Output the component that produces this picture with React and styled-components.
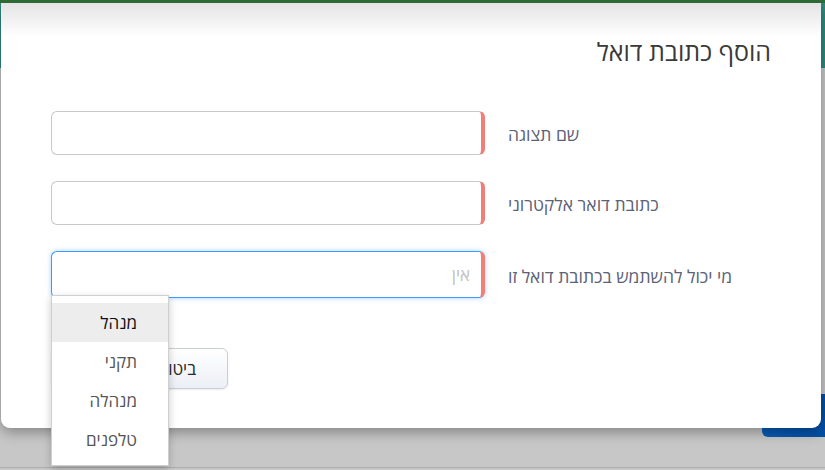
import React from 'react'
import styled, { createGlobalStyle } from 'styled-components'

const GlobalStyle = createGlobalStyle`
   html, body {
      margin: 0;
      padding: 0;
      background: #c7c7c7;
      font-family: "Open Sans", "DejaVu Sans", sans-serif;
   }
`

const Page = styled.div`
   position: relative;
   width: 825px;
   height: 470px;
   overflow: hidden;
   background: #c7c7c7;
   border-top: 3px solid #2d6a35;
   box-sizing: border-box;
`

const Header = styled.div`
   height: 65px;
   background: #2f8a80;
`

const PageBody = styled.div`
   display: flex;
   flex-direction: column;
   justify-content: flex-end;
   height: 399px;
   border-bottom: 1px solid #adadad;
`

const BackButton = styled.div`
   align-self: flex-end;
   width: 63px;
   height: 43px;
   margin-bottom: 30px;
   border-radius: 6px 0 0 6px;
   background: linear-gradient(90deg, #0a5cb8, #0050a8);
`

const Modal = styled.div`
   position: absolute;
   left: 1px;
   top: 0;
   width: 820px;
   height: 425px;
   box-sizing: border-box;
   direction: rtl;
   background: linear-gradient(#e4e4e4 0px, #fff 34px);
   border-radius: 0 0 9px 9px;
   box-shadow: 0 4px 14px rgba(0, 0, 0, 0.35);
   padding: 32px 50px 0 50px;
`

const Title = styled.h2`
   margin: 0 0 44px 0;
   font-size: 25px;
   font-weight: 400;
   color: #3a3a3a;
   line-height: 32px;
`

const Form = styled.div`
   display: flex;
   flex-direction: column;
   gap: 26px;
`

const Row = styled.div`
   display: flex;
   align-items: center;
   gap: 23px;
`

const Label = styled.label`
   flex: 1;
   font-size: 17.5px;
   color: #5b6276;
   text-align: left;
   direction: ltr;
   padding-top: 2px;
`

const LabelText = styled.span`
   direction: rtl;
   unicode-bidi: embed;
`

const Input = styled.div`
   width: 434px;
   height: ${p => p.$focused ? 47 : 44}px;
   box-sizing: border-box;
   border: 1px solid ${p => p.$focused ? '#3d9bff' : '#c9c9cc'};
   border-right: 4px solid #f07f78;
   border-radius: 6px;
   background: #fff;
   box-shadow: ${p => p.$focused ? '0 0 5px rgba(61, 155, 255, 0.45)' : 'none'};
   display: flex;
   align-items: center;
   padding-right: 11px;
   font-size: 17px;
   color: #c2c2c2;
`

const Buttons = styled.div`
   display: flex;
   justify-content: flex-end;
   gap: 8px;
   margin-top: 50px;
`

const Button = styled.button`
   height: 41px;
   width: ${p => p.$width}px;
   border-radius: 6px;
   font-family: inherit;
   font-size: 17px;
   border: 1px solid ${p => p.$primary ? '#0d4f9c' : '#c8cdda'};
   background: ${p => p.$primary ? '#1565c0' : 'linear-gradient(#ffffff, #eceff5)'};
   color: ${p => p.$primary ? '#fff' : '#2a2a2a'};
   box-shadow: 0 1px 2px rgba(0, 0, 0, 0.08);
`

const Menu = styled.ul`
   position: absolute;
   left: 51px;
   top: 292px;
   width: 116px;
   margin: 0;
   padding: 7px 0 6px 0;
   list-style: none;
   direction: rtl;
   background: #fff;
   border: 1px solid #cfcfcf;
   box-shadow: 0 3px 8px rgba(0, 0, 0, 0.22);
`

const MenuItem = styled.li`
   height: 39px;
   line-height: 39px;
   padding-right: 31px;
   font-size: 17px;
   color: ${p => p.$active ? '#111' : '#555'};
   background: ${p => p.$active ? '#ededed' : 'transparent'};
`

const fields = [
   { label: 'שם תצוגה' },
   { label: 'כתובת דואר אלקטרוני' },
   { label: 'מי יכול להשתמש בכתובת דואל זו', focused: true, placeholder: 'אין' },
]

const options = ['מנהל', 'תקני', 'מנהלה', 'טלפנים']

export default function App() {
   return (
      <>
         <GlobalStyle />
         <Page>
            <Header />
            <PageBody>
               <BackButton />
            </PageBody>
            <Modal>
               <Title>הוסף כתובת דואל</Title>
               <Form>
                  {fields.map(f => (
                     <Row key={f.label}>
                        <Label><LabelText>{f.label}</LabelText></Label>
                        <Input $focused={f.focused}>{f.placeholder}</Input>
                     </Row>
                  ))}
               </Form>
               <Buttons>
                  <Button $width={100}>ביטול</Button>
                  <Button $primary $width={69}>שמור</Button>
               </Buttons>
            </Modal>
            <Menu>
               {options.map((o, i) => (
                  <MenuItem key={o} $active={i === 0}>{o}</MenuItem>
               ))}
            </Menu>
         </Page>
      </>
   )
}
